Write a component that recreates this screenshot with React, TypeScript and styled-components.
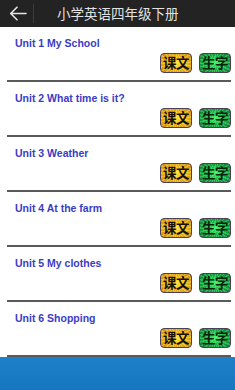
import React from "react";
import styled, { createGlobalStyle } from "styled-components";

const Global = createGlobalStyle`
  html, body { margin: 0; padding: 0; background: #ffffff; }
  body { width: 235px; height: 390px; overflow: hidden; font-family: "Liberation Sans", "Noto Sans CJK SC", sans-serif; }
`;

const Page = styled.div`
  width: 235px;
  height: 390px;
  display: flex;
  flex-direction: column;
  background: #ffffff;
`;

const Header = styled.div`
  height: 27px;
  flex: none;
  background: #232323;
  display: flex;
  align-items: center;
`;

const BackButton = styled.div`
  width: 33px;
  height: 27px;
  display: flex;
  align-items: center;
  justify-content: center;
  padding-left: 2px;
  box-sizing: border-box;
`;

const Separator = styled.div`
  width: 1px;
  height: 19px;
  background: #3c3c3c;
`;

const Title = styled.div`
  margin-left: 23px;
  color: #e2e2e2;
  font-family: "Noto Sans CJK SC", sans-serif;
  font-size: 13.5px;
  line-height: 27px;
`;

const List = styled.div`
  display: flex;
  flex-direction: column;
`;

const Row = styled.div`
  display: flex;
  flex-direction: column;
  padding: 10px 4px 0 15px;
`;

const UnitTitle = styled.div`
  font-size: 10.5px;
  line-height: 12px;
  font-weight: bold;
  color: #3b3bc4;
`;

const Buttons = styled.div`
  display: flex;
  justify-content: flex-end;
  gap: 7px;
  margin-top: 4px;
  margin-bottom: 7px;
`;

const Badge = styled.div<{ $kind: "text" | "word" }>`
  width: 32px;
  height: 20px;
  box-sizing: border-box;
  border: 1px solid #4a4058;
  border-radius: 4px;
  display: flex;
  align-items: center;
  justify-content: center;
  font-family: "Noto Sans CJK SC", sans-serif;
  font-weight: bold;
  font-size: 13.5px;
  line-height: 1;
  letter-spacing: -0.5px;
  color: ${(p) => (p.$kind === "text" ? "#1a1005" : "#08220e")};
  background:
    repeating-conic-gradient(from 0deg at 50% 50%,
      ${(p) => (p.$kind === "text" ? "rgba(255,240,110,0.4)" : "rgba(120,255,140,0.35)")} 0deg 6deg,
      rgba(0,0,0,0) 6deg 14deg),
    radial-gradient(ellipse at 50% 50%,
      ${(p) =>
        p.$kind === "text"
          ? "#ffe43c 0%, #f2bf18 40%, #c98210 100%"
          : "#44ee66 0%, #1cc04a 40%, #0a6e30 100%"});
`;

const Divider = styled.div`
  height: 2px;
  margin: 0 0 0 -8px;
  background: #5a5a5a;
`;

const BottomBar = styled.div`
  flex: 1;
  background: linear-gradient(#1d80c8, #1677c0);
`;

const units = [
  "Unit 1 My School",
  "Unit 2 What time is it?",
  "Unit 3 Weather",
  "Unit 4 At the farm",
  "Unit 5 My clothes",
  "Unit 6 Shopping",
];

export default function App() {
  return (
    <Page>
      <Global />
      <Header>
        <BackButton>
          <svg width="18" height="15" viewBox="0 0 18 15" fill="none">
            <path d="M17 7.5H2M8 1.2L1.7 7.5 8 13.8" stroke="#e6e6e6" strokeWidth="1.6" strokeLinecap="round" strokeLinejoin="round" />
          </svg>
        </BackButton>
        <Separator />
        <Title>小学英语四年级下册</Title>
      </Header>
      <List>
        {units.map((u) => (
          <Row key={u}>
            <UnitTitle>{u}</UnitTitle>
            <Buttons>
              <Badge $kind="text">课文</Badge>
              <Badge $kind="word">生字</Badge>
            </Buttons>
            <Divider />
          </Row>
        ))}
      </List>
      <BottomBar />
    </Page>
  );
}
